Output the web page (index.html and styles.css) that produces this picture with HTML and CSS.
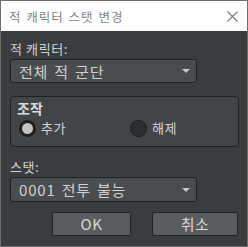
FILE: index.html
```html
<!DOCTYPE html>
<html>
<head>
  <meta charset="utf-8">
  <title>적 캐릭터 스탯 변경</title>
  <link rel="stylesheet" href="styles.css">
</head>
<body>
  <div class="dialog">
    <div class="titlebar">
      <span class="title">적 캐릭터 스탯 변경</span>
      <svg class="close" width="11" height="11" viewBox="0 0 11 11">
        <path d="M0.5 0.5 L10.5 10.5 M10.5 0.5 L0.5 10.5" stroke="#7a7a7a" stroke-width="1.1" fill="none"/>
      </svg>
    </div>
    <div class="content">
      <div class="label">적 캐릭터:</div>
      <div class="select">
        <span class="value">전체 적 군단</span>
        <span class="arrow"></span>
      </div>

      <div class="group">
        <div class="group-title">조작</div>
        <div class="radios">
          <div class="radio checked"><span class="dot"></span>추가</div>
          <div class="radio"><span class="dot"></span>해제</div>
        </div>
      </div>

      <div class="label label-stat">스탯:</div>
      <div class="select select-stat">
        <span class="value">0001 전투 불능</span>
        <span class="arrow"></span>
      </div>

      <div class="buttons">
        <button class="btn btn-ok">OK</button>
        <button class="btn btn-cancel">취소</button>
      </div>
    </div>
  </div>
</body>
</html>
```

FILE: styles.css
```css
body {
  margin: 0;
  background: #3a3d3f;
  font-family: "Noto Sans CJK KR", "Noto Sans", sans-serif;
}

.dialog {
  width: 248px;
  height: 247px;
  box-sizing: border-box;
  border: 1px solid #6e6e6e;
  background: #3a3d3f;
  display: flex;
  flex-direction: column;
  overflow: hidden;
}

.titlebar {
  height: 30px;
  background: #fff;
  display: flex;
  align-items: center;
  justify-content: space-between;
  padding: 0 9px 0 8px;
}

.title {
  font-size: 12.5px;
  color: #858585;
  letter-spacing: 1px;
  word-spacing: 1px;
}

.close {
  margin-top: 1px;
}

.content {
  padding: 10px 8px 0 9px;
  display: flex;
  flex-direction: column;
  color: #d4d4d4;
}

.label {
  font-size: 13px;
  line-height: 16px;
  height: 16px;
  letter-spacing: 0.6px;
}

.label-stat {
  margin-top: 12px;
}

.select {
  margin-top: 2px;
  width: 187px;
  height: 24px;
  box-sizing: border-box;
  border: 1px solid #1f2022;
  border-radius: 3px;
  background: #4a4d50;
  display: flex;
  align-items: center;
  justify-content: space-between;
  padding: 0 6px 0 8px;
}

.select-stat {
  margin-top: 2px;
  height: 25px;
}

.value {
  font-size: 15px;
  color: #d0d0d0;
  letter-spacing: 0.8px;
  word-spacing: 2px;
}

.arrow {
  width: 0;
  height: 0;
  border-left: 4px solid transparent;
  border-right: 4px solid transparent;
  border-top: 4px solid #c8c8c8;
}

.group {
  margin-top: 13px;
  height: 51px;
  box-sizing: border-box;
  border: 1px solid #1f2022;
  border-radius: 4px;
  background: #424548;
  padding: 1px 0 0 6px;
}

.group-title {
  font-size: 14px;
  font-weight: bold;
  line-height: 20px;
  color: #dcdcdc;
}

.radios {
  display: grid;
  grid-template-columns: 111px auto;
  margin-top: 1px;
  padding-left: 2px;
}

.radio {
  display: flex;
  align-items: center;
  gap: 5px;
  font-size: 13px;
  line-height: 18px;
  color: #d4d4d4;
  letter-spacing: 0.5px;
}

.dot {
  width: 17px;
  height: 17px;
  box-sizing: border-box;
  border-radius: 50%;
  border: 1px solid #1a1b1c;
  background: #2b2d2f;
}

.radio.checked .dot {
  border: 3px solid #1e1f21;
  background: #c2c2c2;
}

.buttons {
  margin-top: 10px;
  display: flex;
  justify-content: flex-end;
  gap: 21px;
  padding-right: 1px;
}

.btn {
  height: 24px;
  box-sizing: border-box;
  border: 1px solid #1f2022;
  border-radius: 2px;
  background: #5a5d60;
  color: #d8d8d8;
  font-family: "Noto Sans CJK KR", "Noto Sans", sans-serif;
  font-size: 15px;
  padding: 0;
  line-height: 20px;
  letter-spacing: 0.5px;
}

.btn-ok {
  width: 79px;
}

.btn-cancel {
  width: 86px;
}
```
